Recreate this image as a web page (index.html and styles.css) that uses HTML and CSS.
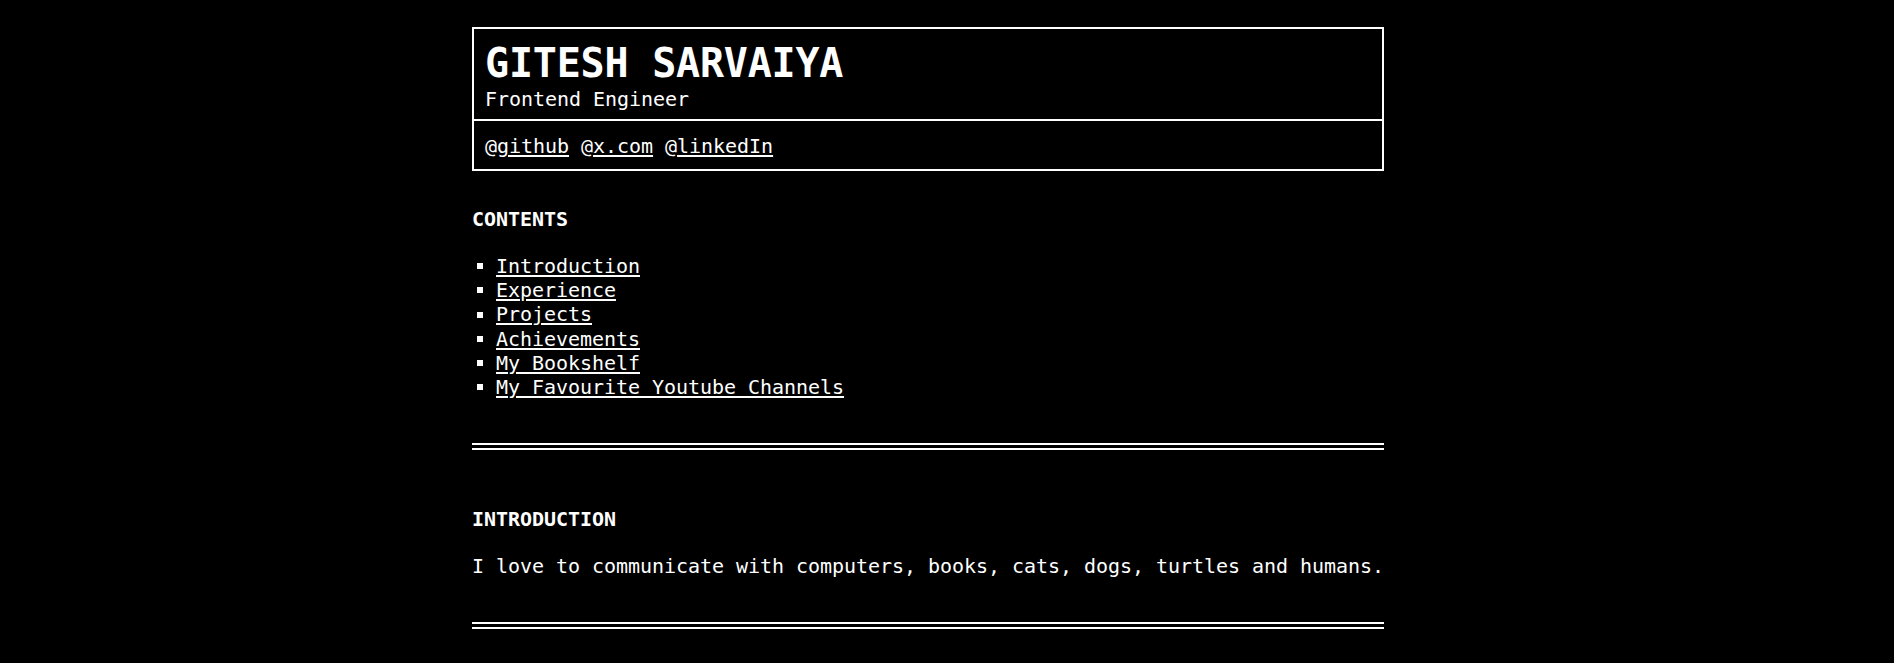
FILE: index.html
```html
<!DOCTYPE html>
<html lang="en">
<head>
<meta charset="utf-8">
<title>Gitesh Sarvaiya</title>
<link rel="stylesheet" href="styles.css">
</head>
<body>
<main class="page">
  <header class="card">
    <div class="card-top">
      <h1 class="name">GITESH SARVAIYA</h1>
      <p class="role">Frontend Engineer</p>
    </div>
    <div class="card-links">
      @<a href="#">github</a> @<a href="#">x.com</a> @<a href="#">linkedIn</a>
    </div>
  </header>

  <section class="section first">
    <h2 class="heading">CONTENTS</h2>
    <ul class="toc">
      <li><a href="#">Introduction</a></li>
      <li><a href="#">Experience</a></li>
      <li><a href="#">Projects</a></li>
      <li><a href="#">Achievements</a></li>
      <li><a href="#">My Bookshelf</a></li>
      <li><a href="#">My Favourite Youtube Channels</a></li>
    </ul>
  </section>
  <hr class="rule">

  <section class="section">
    <h2 class="heading">INTRODUCTION</h2>
    <p class="text">I love to communicate with computers, books, cats, dogs, turtles and humans.</p>
  </section>
  <hr class="rule">
</main>
</body>
</html>
```

FILE: styles.css
```css
html, body {
  margin: 0;
  padding: 0;
  background: #000;
  color: #fff;
}

body {
  font-family: "DejaVu Sans Mono", "Liberation Mono", monospace;
  font-size: 20px;
  line-height: 24px;
  letter-spacing: -0.04px;
}

.page {
  width: 912px;
  margin-left: 472px;
  padding-top: 27px;
}

a {
  color: #fff;
  text-decoration: underline;
  text-decoration-thickness: 2px;
  text-underline-offset: 2px;
}

.card {
  border: 2px solid #fff;
}

.card-top {
  padding: 10px 10px 8px 11px;
}

.name {
  margin: 0;
  font-size: 40px;
  line-height: 48px;
  font-weight: bold;
  letter-spacing: -0.2px;
}

.role {
  margin: 0;
  font-size: 20px;
  line-height: 24px;
}

.card-links {
  border-top: 2px solid #fff;
  padding: 11px 10px 9px 11px;
  line-height: 28px;
}

.section {
  padding-top: 57px;
  padding-bottom: 44px;
}

.section.first {
  padding-top: 36px;
}

.heading {
  margin: 0 0 23px 0;
  font-size: 20px;
  line-height: 24px;
  font-weight: bold;
}

.toc {
  list-style: none;
  margin: 0;
  padding: 0;
  line-height: 24.2px;
}

.toc li {
  display: flex;
  align-items: center;
  gap: 13px;
  padding-left: 5px;
}

.toc li::before {
  content: "";
  width: 6px;
  height: 6px;
  background: #fff;
  flex: none;
}

.text {
  margin: 0;
  white-space: nowrap;
}

.rule {
  margin: 0;
  height: 0;
  border: none;
  border-top: 7px double #fff;
}
```
